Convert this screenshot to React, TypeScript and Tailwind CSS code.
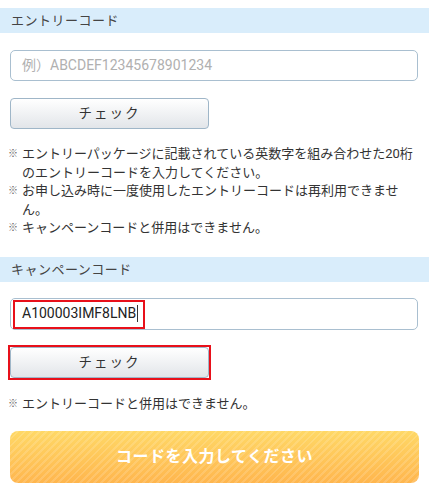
import React from "react";

const font = "font-['Roboto','Noto_Sans_CJK_JP',sans-serif]";

function Header({ children }: { children: React.ReactNode }) {
  return (
    <div className="h-[25px] bg-[#d9edfb] px-[11px] flex items-center text-[13px] text-[#444] tracking-[0.5px]">
      {children}
    </div>
  );
}

function CheckButton() {
  return (
    <button className="w-[199px] h-[31px] rounded-[4px] border border-[#9fb6c8] bg-[linear-gradient(#ffffff,#e2e5e9)] text-[13.5px] text-[#333] tracking-[2px] flex items-center justify-center">
      チェック
    </button>
  );
}

function Note({ children }: { children: React.ReactNode }) {
  return (
    <div className="flex">
      <span className="w-[14px] shrink-0 text-[10px] text-[#666]">※</span>
      <span>{children}</span>
    </div>
  );
}

export default function App() {
  return (
    <div className={`w-[429px] h-[500px] bg-white overflow-hidden pt-[8px] ${font}`}>
      <Header>エントリーコード</Header>
      <div className="pl-[10px] pr-[11px] pt-[17px]">
        <div className="h-[31px] rounded-[5px] border border-[#a9bfd0] flex items-center pl-[11px] text-[14px] text-[#b0b0b0]">
          例）ABCDEF12345678901234
        </div>
        <div className="mt-[17px]">
          <CheckButton />
        </div>
      </div>
      <div className="pl-[8px] pr-[10px] mt-[16px] text-[13px] leading-[18.6px] text-[#333]">
        <Note>エントリーパッケージに記載されている英数字を組み合わせた20桁のエントリーコードを入力してください。</Note>
        <Note>お申し込み時に一度使用したエントリーコードは再利用できません。</Note>
        <Note>キャンペーンコードと併用はできません。</Note>
      </div>
      <div className="mt-[19px]">
        <Header>キャンペーンコード</Header>
      </div>
      <div className="pl-[10px] pr-[11px] pt-[16px]">
        <div className="relative h-[32px] rounded-[5px] border border-[#a9bfd0] flex items-center pl-[11px] text-[14px] text-[#222]">
          A100003IMF8LNB
          <span className="ml-[1px] w-[1px] h-[17px] bg-[#333]" />
          <div className="absolute left-[2px] top-[1px] w-[132px] h-[29px] border-2 border-[#e8101a]" />
        </div>
        <div className="mt-[17px] relative w-[199px]">
          <CheckButton />
          <div className="absolute -left-[2px] -top-[2px] w-[203px] h-[35px] border-2 border-[#e8101a]" />
        </div>
      </div>
      <div className="pl-[8px] mt-[17px] text-[13px] leading-[18.6px] text-[#333]">
        <Note>エントリーコードと併用はできません。</Note>
      </div>
      <div className="pl-[10px] pr-[10px] mt-[17px]">
        <div className="h-[52px] rounded-[8px] bg-[repeating-linear-gradient(135deg,rgba(255,255,255,0.14)_0px,rgba(255,255,255,0.14)_2px,transparent_2px,transparent_5px),linear-gradient(#ffd866,#ffb64e)] flex items-center justify-center text-white text-[16px] font-bold tracking-[0.5px]">
          コードを入力してください
        </div>
      </div>
    </div>
  );
}
